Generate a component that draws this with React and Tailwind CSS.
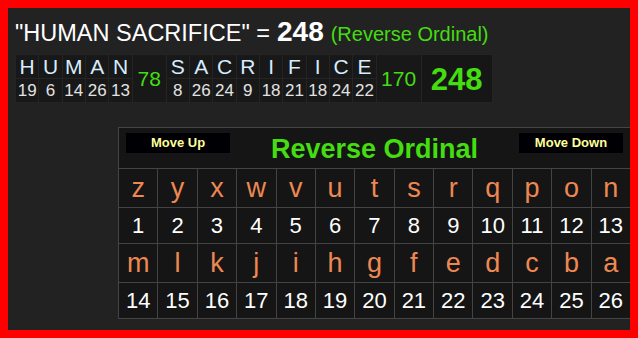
const font = { fontFamily: '"Liberation Sans", Arial, sans-serif' }

const words = [
  { letters: ['H', 'U', 'M', 'A', 'N'], values: [19, 6, 14, 26, 13], total: 78 },
  { letters: ['S', 'A', 'C', 'R', 'I', 'F', 'I', 'C', 'E'], values: [8, 26, 24, 9, 18, 21, 18, 24, 22], total: 170 },
]

const alphabet = 'zyxwvutsrqponmlkjihgfedcba'.split('')

function WordTable() {
  const cells = []
  let col = 1
  words.forEach((word, w) => {
    word.letters.forEach((letter, i) => {
      cells.push(
        <div key={`l${w}${i}`} style={{ gridColumn: col, gridRow: 1 }} className="flex items-end justify-center bg-[#181818] pb-[1px] text-[21px] leading-none text-[#d6ecff]">
          {letter}
        </div>
      )
      cells.push(
        <div key={`v${w}${i}`} style={{ gridColumn: col, gridRow: 2 }} className="flex items-center justify-center bg-[#181818] text-[17px] leading-none text-[#e2e2e2]">
          {word.values[i]}
        </div>
      )
      col++
    })
    cells.push(
      <div key={`t${w}`} style={{ gridColumn: col, gridRow: '1 / span 2' }} className="flex items-center justify-center bg-[#181818] text-[21px] leading-none text-[#44dd11]">
        {word.total}
      </div>
    )
    col++
  })
  cells.push(
    <div key="sum" style={{ gridColumn: col, gridRow: '1 / span 2' }} className="flex items-center justify-center bg-[#161616] pt-[2px] text-[31px] font-bold leading-none text-[#44dd11]">
      248
    </div>
  )
  return (
    <div className="mt-[6px] grid w-fit grid-cols-[repeat(5,22.33px)_33px_repeat(9,22.33px)_44px_70px] grid-rows-[23px_23px] gap-px bg-[#242424] p-px">
      {cells}
    </div>
  )
}

function CipherPanel() {
  const first = alphabet.slice(0, 13)
  const second = alphabet.slice(13)
  const letterRow = (letters, key) =>
    letters.map((l, i) => (
      <div key={key + i} className="flex h-[38px] items-start justify-center bg-[#151515] pt-[4px] text-[27px] leading-[30px] text-[#ee8852]">
        {l}
      </div>
    ))
  const numberRow = (start, key) =>
    Array.from({ length: 13 }, (_, i) => (
      <div key={key + i} className="flex h-[35px] items-center justify-center bg-[#151515] pt-[1px] text-[22px] leading-none text-white">
        {start + i}
      </div>
    ))

  return (
    <div className="ml-[103px] mt-[24px] w-[513px] border border-[#444] bg-[#151515]">
      <div className="flex h-[40px] items-start justify-between px-[7px]">
        <button className="mt-[5px] flex h-[20px] w-[104px] items-center justify-center bg-[#000004] text-[13px] font-bold text-[#ffff99]">
          Move Up
        </button>
        <div className="mt-[8px] text-[27px] font-bold leading-none text-[#44dd11]">Reverse Ordinal</div>
        <button className="mt-[5px] flex h-[20px] w-[104px] items-center justify-center bg-[#000004] text-[13px] font-bold text-[#ffff99]">
          Move Down
        </button>
      </div>
      <div className="grid grid-cols-13 gap-px border-t border-[#444] bg-[#444]">
        {letterRow(first, 'a')}
        {numberRow(1, 'b')}
        {letterRow(second, 'c')}
        {numberRow(14, 'd')}
      </div>
    </div>
  )
}

export default function App() {
  return (
    <div style={font} className="h-[338px] w-[638px] overflow-hidden border-8 border-[#ff0000] bg-[#222222]">
      <div className="pl-[7px] pt-[10px]">
        <div className="flex items-baseline gap-[7px] leading-[28px]">
          <span className="text-[23.5px] text-white">"HUMAN SACRIFICE" =</span>
          <span className="text-[28px] font-bold text-white">248</span>
          <span className="text-[20px] text-[#44dd11]">(Reverse Ordinal)</span>
        </div>
        <WordTable />
        <CipherPanel />
      </div>
    </div>
  )
}
